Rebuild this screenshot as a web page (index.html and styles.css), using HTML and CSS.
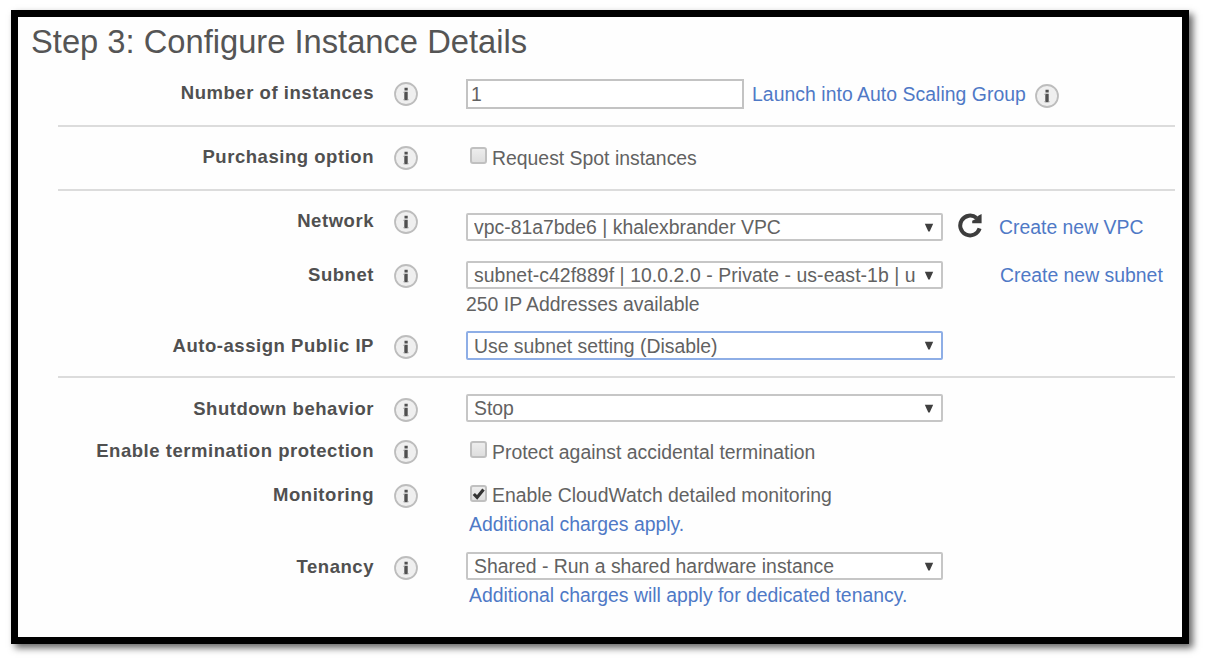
FILE: index.html
```html
<!DOCTYPE html>
<html lang="en">
<head>
<meta charset="utf-8">
<title>Step 3: Configure Instance Details</title>
<link rel="stylesheet" href="styles.css">
</head>
<body>
<svg class="defs" width="0" height="0">
  <symbol id="info" viewBox="0 0 24 24">
    <circle cx="12" cy="12" r="11" fill="#efefef" stroke="#bdbdbd" stroke-width="1.8"/>
    <path d="M10.5 5.8h3.2v2.6h-3.2zM10.3 9.8h3.4v8.4h-3.4z" fill="#505050"/>
    <path d="M9.5 9.8h1v1.2h-1zM9.5 17h1v1.2h-1zM13.7 17h.8v1.2h-.8z" fill="#a0a0a0"/>
  </symbol>
  <symbol id="arrow" viewBox="0 0 10 9"><path d="M.8.8h8.4L5.7 8.5H4.3z" fill="#404040"/></symbol>
</svg>
<main class="frame">
  <h1 class="title">Step 3: Configure Instance Details</h1>

  <section class="group first">
    <div class="row short">
      <label class="label">Number of instances</label>
      <svg class="info"><use href="#info"/></svg>
      <div class="control up">
        <div class="line">
          <div class="input">1</div>
          <a class="link launch">Launch into Auto Scaling Group</a>
          <svg class="info trailing"><use href="#info"/></svg>
        </div>
      </div>
    </div>
  </section>

  <section class="group">
    <div class="row short">
      <label class="label">Purchasing option</label>
      <svg class="info"><use href="#info"/></svg>
      <div class="control"><div class="check"><span class="box"></span><span class="text">Request Spot instances</span></div></div>
    </div>
  </section>

  <section class="group">
    <div class="row network">
      <label class="label">Network</label>
      <svg class="info"><use href="#info"/></svg>
      <div class="control down">
        <div class="line">
          <div class="select"><span class="value">vpc-81a7bde6 | khalexbrander VPC</span><svg class="arrow"><use href="#arrow"/></svg></div>
          <svg class="refresh" viewBox="0 0 26 26"><path d="M22.6 16.4A9.9 9.9 0 1 1 19.6 6" fill="none" stroke="#3d3d3d" stroke-width="4"/><path d="M24.6 2v9.2h-9.4v-2.4l3-1.6 3.4-3.6z" fill="#3d3d3d"/></svg>
          <a class="link new-vpc">Create new VPC</a>
        </div>
      </div>
    </div>
    <div class="row subnet">
      <label class="label">Subnet</label>
      <svg class="info"><use href="#info"/></svg>
      <div class="control up">
        <div class="line">
          <div class="select"><span class="value wide">subnet-c42f889f | 10.0.2.0 - Private - us-east-1b | u</span><svg class="arrow"><use href="#arrow"/></svg></div>
          <a class="link new-subnet">Create new subnet</a>
        </div>
        <div class="note">250 IP Addresses available</div>
      </div>
    </div>
    <div class="row public-ip">
      <label class="label">Auto-assign Public IP</label>
      <svg class="info"><use href="#info"/></svg>
      <div class="control higher"><div class="select focused"><span class="value">Use subnet setting (Disable)</span><svg class="arrow"><use href="#arrow"/></svg></div></div>
    </div>
  </section>

  <section class="group last">
    <div class="row shutdown">
      <label class="label">Shutdown behavior</label>
      <svg class="info"><use href="#info"/></svg>
      <div class="control higher"><div class="select"><span class="value">Stop</span><svg class="arrow"><use href="#arrow"/></svg></div></div>
    </div>
    <div class="row protection">
      <label class="label">Enable termination protection</label>
      <svg class="info"><use href="#info"/></svg>
      <div class="control"><div class="check"><span class="box"></span><span class="text">Protect against accidental termination</span></div></div>
    </div>
    <div class="row monitoring">
      <label class="label">Monitoring</label>
      <svg class="info"><use href="#info"/></svg>
      <div class="control lift">
        <div class="check"><span class="box checked"><svg class="tick" viewBox="0 0 17 17"><path d="M3.8 9l3.3 3.4 6.4-8" fill="none" stroke="#333" stroke-width="3.2"/></svg></span><span class="text">Enable CloudWatch detailed monitoring</span></div>
        <a class="link charges">Additional charges apply.</a>
      </div>
    </div>
    <div class="row">
      <label class="label">Tenancy</label>
      <svg class="info"><use href="#info"/></svg>
      <div class="control higher">
        <div class="select"><span class="value">Shared - Run a shared hardware instance</span><svg class="arrow"><use href="#arrow"/></svg></div>
        <a class="link dedicated">Additional charges will apply for dedicated tenancy.</a>
      </div>
    </div>
  </section>
</main>
</body>
</html>
```
FILE: styles.css
```css
* { box-sizing: border-box; }
body {
  margin: 0;
  padding: 10px 20px 18px 11px;
  height: 662px;
  overflow: hidden;
  background: #fff;
  font: 19.4px/24px "Liberation Sans", Arial, sans-serif;
  color: #626262;
}
.defs { display: block; width: 0; height: 0; }
.frame {
  width: 1178px;
  height: 634px;
  border: 7px solid #000;
  background: #fefefe;
  box-shadow: 4px 4px 7px rgba(0, 0, 0, .6);
}
.title {
  height: 54px;
  margin: 0;
  padding: 6px 0 0 13px;
  font-size: 32.7px;
  line-height: 38px;
  font-weight: 400;
  color: #555;
  white-space: nowrap;
}
.group {
  width: 1117px;
  margin-left: 40px;
  padding-top: 19px;
  border-bottom: 2px solid #dcdcdc;
}
.group.first { padding-top: 11px; }
.group.last { padding-top: 20px; border: 0; }
.row {
  display: grid;
  grid-template-columns: 336px 24px 1fr;
  align-items: start;
}
.row.short { height: 43px; }
.row.network { height: 54px; }
.row.subnet { height: 71px; }
.row.public-ip { height: 41px; }
.row.shutdown { height: 42px; }
.row.protection { height: 44px; }
.row.monitoring { height: 72px; }
.label {
  margin: -1px 20px 0 0;
  font-size: 18.5px;
  font-weight: 700;
  letter-spacing: .54px;
  line-height: 23px;
  text-align: right;
  white-space: nowrap;
  color: #505050;
}
.info { display: block; width: 24px; height: 24px; }
.control { margin-left: 48px; }
.control.up { margin-top: -3px; }
.control.down { margin-top: 3px; }
.control.higher { margin-top: -4px; }
.control.lift { margin-top: -1px; }
.line { display: flex; align-items: center; white-space: nowrap; }
.input {
  width: 278px;
  height: 30px;
  padding: 1px 3px;
  border: 2px solid #c3c3c3;
  background: #fff;
}
.select {
  display: flex;
  align-items: center;
  width: 477px;
  height: 28px;
  padding: 0 7px 0 6px;
  border: 2px solid #c6c6c6;
  border-radius: 2px;
  background: #fff;
}
.select.focused { height: 29px; border-color: #8eaee6; }
.value { width: 443px; overflow: hidden; white-space: nowrap; }
.value.wide { letter-spacing: .07px; }
.arrow { flex: none; width: 10px; height: 9px; margin-left: 8px; }
.link { color: #4f79c6; white-space: nowrap; }
.launch { margin-left: 8px; letter-spacing: .04px; }
.trailing { margin: 3px 0 0 9px; }
.refresh { width: 26px; height: 26px; margin: -5px 0 0 14px; }
.new-vpc { margin-left: 16px; }
.new-subnet { margin-left: 57px; }
.note { margin-top: 3px; }
.check { display: flex; align-items: flex-start; white-space: nowrap; }
.box {
  width: 17px;
  height: 17px;
  margin: 1px 5px 0 4px;
  border: 2px solid #c0c0c0;
  border-radius: 3px;
  background: linear-gradient(#ededed, #dedede);
}
.box.checked { margin-top: 2px; }
.tick { display: block; width: 17px; height: 17px; margin: -2px; }
.charges, .dedicated { display: block; margin-left: 3px; }
.charges { margin-top: 5px; }
.dedicated { margin-top: 3px; }
```
